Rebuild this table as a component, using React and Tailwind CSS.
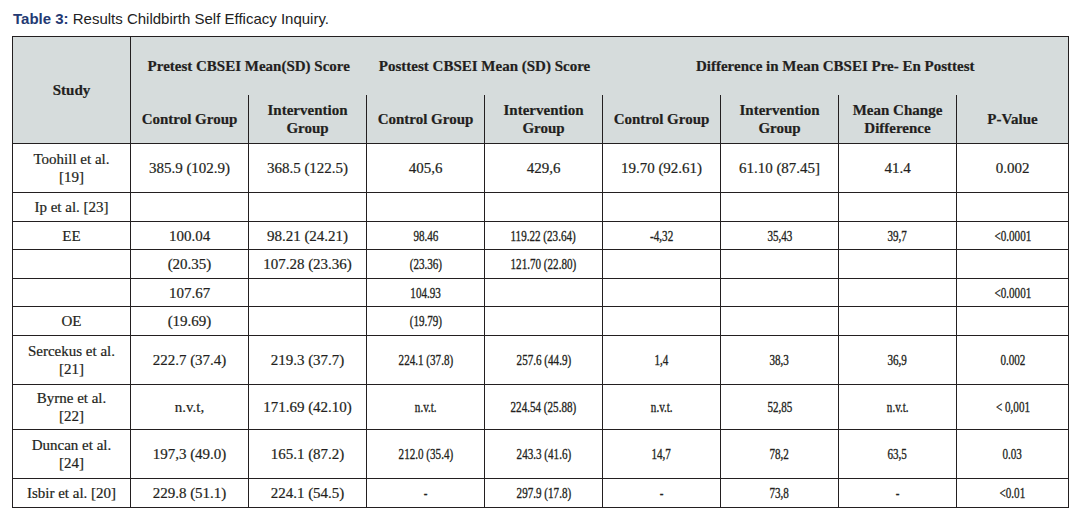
const ink = "text-[#231f20]";

const rows = [
  { h: "h-[49px]", study: <>Toohill et al.<br />[19]</>, cells: ["385.9 (102.9)", "368.5 (122.5)", "405,6", "429,6", "19.70 (92.61)", "61.10 (87.45]", "41.4", "0.002"], narrow: false },
  { h: "h-[29px]", study: "Ip et al. [23]", cells: ["", "", "", "", "", "", "", ""], narrow: false },
  { h: "h-[28px]", study: "EE", cells: ["100.04", "98.21 (24.21)", "98.46", "119.22 (23.64)", "-4,32", "35,43", "39,7", "<0.0001"], narrow: true },
  { h: "h-[29px]", study: "", cells: ["(20.35)", "107.28 (23.36)", "(23.36)", "121.70 (22.80)", "", "", "", ""], narrow: true },
  { h: "h-[28px]", study: "", cells: ["107.67", "", "104.93", "", "", "", "", "<0.0001"], narrow: true },
  { h: "h-[29px]", study: "OE", cells: ["(19.69)", "", "(19.79)", "", "", "", "", ""], narrow: true },
  { h: "h-[49px]", study: <>Sercekus et al.<br />[21]</>, cells: ["222.7 (37.4)", "219.3 (37.7)", "224.1 (37.8)", "257.6 (44.9)", "1,4", "38,3", "36,9", "0.002"], narrow: true },
  { h: "h-[45px]", study: <>Byrne et al.<br />[22]</>, cells: ["n.v.t,", "171.69 (42.10)", "n.v.t.", "224.54 (25.88)", "n.v.t.", "52,85", "n.v.t.", "< 0,001"], narrow: true },
  { h: "h-[49px]", study: <>Duncan et al.<br />[24]</>, cells: ["197,3 (49.0)", "165.1 (87.2)", "212.0 (35.4)", "243.3 (41.6)", "14,7", "78,2", "63,5", "0.03"], narrow: true },
  { h: "h-[29px]", study: "Isbir et al. [20]", cells: ["229.8 (51.1)", "224.1 (54.5)", "-", "297.9 (17.8)", "-", "73,8", "-", "<0.01"], narrow: true },
];

const Cell = ({ value, squeeze }) => (
  <td className="border border-[#231f20] px-1 text-center align-middle leading-[18px] whitespace-nowrap">
    {squeeze ? (
      <span className="inline-block scale-x-[0.74] [-webkit-text-stroke:0.35px_#231f20]">{value}</span>
    ) : (
      value
    )}
  </td>
);

export default function App() {
  return (
    <div className="bg-white w-[1080px] h-[519px] overflow-hidden">
      {/* Caption */}
      <div className="pt-[10px] pl-[13px] text-[15px] leading-[18px] text-[#222] font-['Liberation_Sans',Arial,sans-serif]">
        <span className="font-bold text-[#243a73]">Table 3:</span> Results Childbirth Self Efficacy Inquiry.
      </div>

      <table
        className={`mt-[8px] ml-[12px] w-[1057px] table-fixed border-collapse border border-[#231f20] text-[15px] ${ink} [-webkit-text-stroke:0.2px_#231f20] font-['Liberation_Serif','Times_New_Roman',serif]`}
      >
        <colgroup>
          <col className="w-[118px]" />
          <col className="w-[118px]" />
          <col className="w-[118px]" />
          <col className="w-[118px]" />
          <col className="w-[118px]" />
          <col className="w-[118px]" />
          <col className="w-[118px]" />
          <col className="w-[118px]" />
          <col />
        </colgroup>
        <thead className="bg-[#d6dcdc] font-bold leading-[18px]">
          <tr className="h-[58px]">
            <th rowSpan={2} className="border-r border-b border-[#231f20] text-center align-middle">
              Study
            </th>
            <th colSpan={2} className="text-center align-middle whitespace-nowrap">
              Pretest CBSEI Mean(SD) Score
            </th>
            <th colSpan={2} className="text-center align-middle whitespace-nowrap">
              Posttest CBSEI Mean (SD) Score
            </th>
            <th colSpan={4} className="text-center align-middle whitespace-nowrap">
              Difference in Mean CBSEI Pre- En Posttest
            </th>
          </tr>
          <tr className="h-[49px]">
            <th className="border-l border-b border-[#231f20] text-center align-middle whitespace-nowrap">Control Group</th>
            <th className="border-l border-b border-[#231f20] text-center align-middle">Intervention<br />Group</th>
            <th className="border-l border-b border-[#231f20] text-center align-middle whitespace-nowrap">Control Group</th>
            <th className="border-l border-b border-[#231f20] text-center align-middle">Intervention<br />Group</th>
            <th className="border-l border-b border-[#231f20] text-center align-middle whitespace-nowrap">Control Group</th>
            <th className="border-l border-b border-[#231f20] text-center align-middle">Intervention<br />Group</th>
            <th className="border-l border-b border-[#231f20] text-center align-middle">Mean Change<br />Difference</th>
            <th className="border-l border-b border-[#231f20] text-center align-middle">P-Value</th>
          </tr>
        </thead>
        <tbody>
          {rows.map((row, i) => (
            <tr key={i} className={row.h}>
              <td className="border border-[#231f20] px-1 text-center align-middle leading-[18px] whitespace-nowrap">
                {row.study}
              </td>
              {row.cells.map((c, j) => (
                <Cell key={j} value={c} squeeze={row.narrow && j >= 2} />
              ))}
            </tr>
          ))}
        </tbody>
      </table>
    </div>
  );
}
